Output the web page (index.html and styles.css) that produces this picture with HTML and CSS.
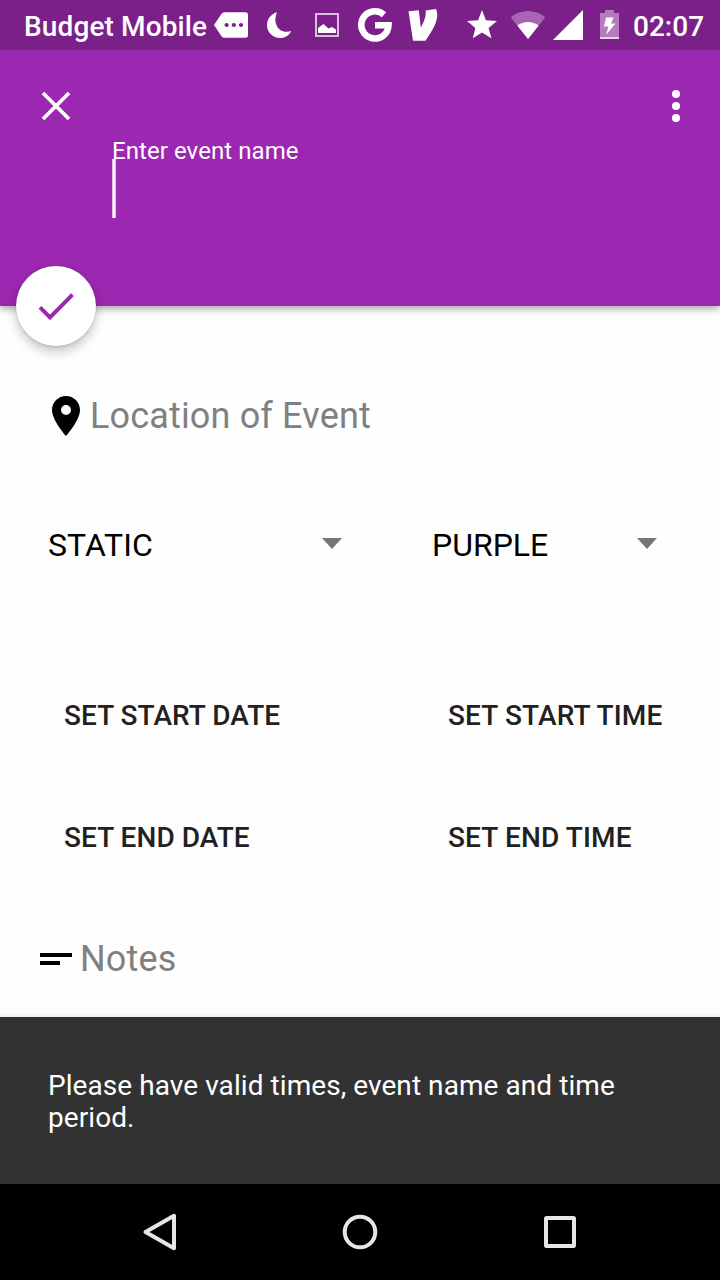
FILE: index.html
```html
<!DOCTYPE html>
<html lang="en">
<head>
<meta charset="utf-8">
<title>New event</title>
<link rel="stylesheet" href="styles.css">
</head>
<body>
<div class="screen">
  <div class="status-bar">
    <span class="carrier">Budget Mobile</span>
    <svg width="44" height="50" viewBox="210 0 44 50"><path fill="#fff" fill-rule="evenodd" d="M214 25L221.500 13.800Q222.500 12.200 224.500 12.200H245.500Q248 12.200 248 14.700V35.300Q248 37.800 245.500 37.800H224.500Q222.500 37.800 221.500 36.200ZM226.600 22.900a2.100 2.100 0 1 0 .01 0ZM233.800 22.900a2.100 2.100 0 1 0 .01 0ZM241 22.900a2.100 2.100 0 1 0 .01 0Z"/></svg>
    <svg width="50" height="50" viewBox="254 0 50 50"><path fill="#fff" d="M277 12.200C270.500 14 267 19.500 267 25C267 32.500 273 38 280 38C285 38 289 35.500 291.300 31C281.500 34.500 271.500 26 277 12.200Z"/></svg>
    <svg width="46" height="50" viewBox="304 0 46 50"><rect x="316" y="14" width="22" height="22" fill="none" stroke="#d9bfdd" stroke-width="2"/><path fill="#fff" d="M318 33V28L323.500 24L328.500 28.500L332 27L336 29.500V33Z"/></svg>
    <svg width="50" height="50" viewBox="350 0 50 50"><path fill="none" stroke="#fff" stroke-width="6.600" d="M384 14.800A13.600 13.600 0 1 0 388.500 25.200H375"/></svg>
    <svg width="50" height="50" viewBox="400 0 50 50"><path fill="#fff" d="M408.500 11.200L418.800 10.200L420.800 27.500C424 22 426.500 15.500 425.600 10.500L436 9C440.500 19 432 31 425.500 40.800H413Z"/></svg>
    <svg width="54" height="50" viewBox="450 0 54 50"><path fill="#fff" d="M482 10L485.900 20.200L497 21L488.600 28L491.400 38.300L482 32.600L472.800 38.300L475.400 28L467 21L478.100 20.200Z"/></svg>
    <svg width="45" height="50" viewBox="504 0 45 50"><path fill="#a865b3" d="M528 39L510.700 17.200C520.500 9 535.500 9 545.300 17.200Z"/><path fill="#fff" d="M528 39L517.300 25.500C523.500 20.800 532.500 20.800 538.700 25.500Z"/></svg>
    <svg width="41" height="50" viewBox="549 0 41 50"><path fill="#fff" d="M553 40L583 10V40Z"/></svg>
    <svg width="43" height="50" viewBox="590 0 43 50"><path fill="#b47cbd" d="M600 13H605V10H614V13H619V37H600Z"/><path fill="#e5d3e8" d="M600 37H619V39H600Z"/><path fill="#fff" d="M606 17.500H613.500L611 23.500H615.500L606 35L608.500 26.500H604Z"/></svg>
    <span class="clock">02:07</span>
  </div>

  <header class="header">
    <div class="toolbar">
      <svg width="32" height="32" viewBox="0 0 32 32"><path d="M3 3L29 29M29 3L3 29" stroke="#fff" stroke-width="3.800"/></svg>
      <svg width="8" height="32" viewBox="0 0 8 32" fill="#fff"><circle cx="4" cy="4" r="4"/><circle cx="4" cy="16" r="4"/><circle cx="4" cy="28" r="4"/></svg>
    </div>
    <div class="name-field">
      <span class="name-label">Enter event name</span>
      <span class="caret"></span>
    </div>
    <div class="fab"><svg width="80" height="80" viewBox="16 266 80 80"><path d="M40 307.300L50 317.300L72.500 294.700" fill="none" stroke="#9c27b0" stroke-width="4"/></svg></div>
  </header>

  <main class="form">
    <div class="location">
      <svg width="28" height="40" viewBox="5 2 14 20"><path d="M12 2C8.130 2 5 5.130 5 9c0 5.250 7 13 7 13s7-7.750 7-13c0-3.870-3.130-7-7-7zm0 9.500a2.500 2.500 0 0 1 0-5 2.500 2.500 0 0 1 0 5z"/></svg>
      <span class="hint">Location of Event</span>
    </div>
    <div class="row selects">
      <div class="select">STATIC<i class="arrow"></i></div>
      <div class="select">PURPLE<i class="arrow"></i></div>
    </div>
    <div class="row buttons"><span>SET START DATE</span><span class="time">SET START TIME</span></div>
    <div class="row buttons"><span>SET END DATE</span><span class="time">SET END TIME</span></div>
    <div class="notes">
      <svg width="32" height="12" viewBox="0 0 32 12"><path d="M0 0H32V4H0ZM0 8H20V12H0Z"/></svg>
      <span class="hint">Notes</span>
    </div>
  </main>

  <div class="snackbar">Please have valid times, event name and time period.</div>

  <nav class="nav-bar">
    <svg width="40" height="48" viewBox="140 1208 40 48"><path d="M145.500 1232L174 1215.800V1248.200Z"/></svg>
    <svg width="40" height="48" viewBox="340 1208 40 48"><circle cx="360" cy="1232" r="15.300"/></svg>
    <svg width="40" height="48" viewBox="540 1208 40 48"><rect x="546" y="1218" width="28" height="28" rx="0.800"/></svg>
  </nav>
</div>
</body>
</html>
```

FILE: styles.css
```css
* { box-sizing: border-box; }
body { margin: 0; font-family: Roboto, "Liberation Sans", sans-serif; }
svg { display: block; flex: none; }
.screen { width: 720px; height: 1280px; display: flex; flex-direction: column; background: #fefefe; overflow: hidden; }

.status-bar { position: relative; z-index: 1; height: 50px; flex: none; display: flex; padding-left: 24px; background: #7b1f89; color: #fff; font-size: 28px; font-weight: 500; line-height: 53px; white-space: nowrap; }
.carrier { width: 186px; letter-spacing: .12px; }

.header { position: relative; height: 256px; flex: none; background: #9c27b0; color: #fff; box-shadow: 0 3px 7px rgba(0, 0, 0, .34); }
.toolbar { display: flex; justify-content: space-between; padding: 40px 40px 0; }
.name-field { display: flex; flex-direction: column; padding: 14px 0 0 112px; }
.name-label { font-size: 24px; line-height: 30px; height: 23px; letter-spacing: .07px; white-space: nowrap; }
.caret { width: 4px; height: 59px; background: linear-gradient(90deg, #d9a8e0, #fff 45%, #fff 55%, #d9a8e0); }
.fab { position: absolute; left: 16px; bottom: -40px; width: 80px; height: 80px; border-radius: 50%; background: #fff; box-shadow: 0 6px 11px rgba(0, 0, 0, .22), 0 1px 3px rgba(0, 0, 0, .12); }

.form { height: 711px; flex: none; display: flex; flex-direction: column; }
.hint { font-size: 36px; line-height: 42px; color: #808080; letter-spacing: .16px; white-space: nowrap; }
.location { display: flex; align-items: center; gap: 10px; height: 40px; margin: 90px 0 0 52px; }
.row { display: grid; grid-template-columns: 384px 1fr; white-space: nowrap; }
.selects { margin-top: 89px; padding-left: 48px; height: 40px; font-size: 32px; line-height: 40px; color: #000; }
.select { display: flex; justify-content: space-between; padding-right: 90px; letter-spacing: .1px; }
.select + .select { padding-right: 63px; letter-spacing: 0; }
.arrow { width: 20px; height: 11px; margin-top: 13px; background: #757575; clip-path: polygon(0 0, 100% 0, 50% 100%); }
.buttons { margin-top: 131px; padding-left: 64px; height: 40px; font-size: 28px; font-weight: 500; line-height: 40px; letter-spacing: .05px; color: #212121; }
.time { letter-spacing: .14px; }
.buttons + .buttons { margin-top: 82px; }
.notes { display: flex; align-items: center; gap: 8px; height: 42px; margin: 80px 0 0 40px; }

.snackbar { position: relative; height: 167px; flex: none; padding: 53px 48px 0; background: #323232; color: #fff; font-size: 28px; line-height: 32px; letter-spacing: .065px; box-shadow: 0 0 5px rgba(0, 0, 0, .12); }
.nav-bar { height: 96px; flex: none; display: flex; align-items: center; justify-content: space-between; padding: 0 140px; background: #000; }
.nav-bar svg { fill: none; stroke: #e6e6e6; stroke-width: 4; stroke-linejoin: round; }
```
